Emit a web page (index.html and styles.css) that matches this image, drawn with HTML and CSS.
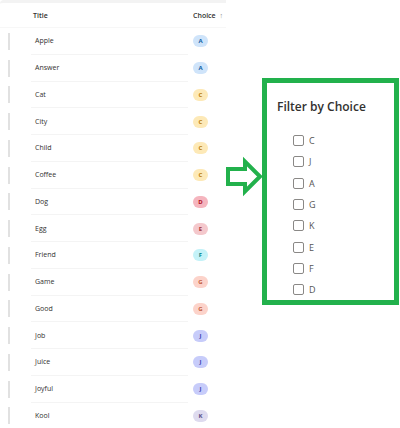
FILE: index.html
```html
<!DOCTYPE html>
<html lang="en">
<head>
    <meta charset="UTF-8">
    <meta name="viewport" content="width=device-width, initial-scale=1.0">
    <title>Filter by Choice</title>
    <link rel="stylesheet" href="styles.css">
</head>
<body>
    <!-- list view -->
    <div class="list">
        <div class="head">
            <span class="h-title">Title</span>
            <span class="h-choice">Choice <span class="sort">&#8593;</span></span>
        </div>
        <div class="row"><i class="handle"></i><span class="title">Apple</span><span class="badge b-a">A</span></div>
        <div class="row"><i class="handle"></i><span class="title">Answer</span><span class="badge b-a">A</span></div>
        <div class="row"><i class="handle"></i><span class="title">Cat</span><span class="badge b-c">C</span></div>
        <div class="row"><i class="handle"></i><span class="title">City</span><span class="badge b-c">C</span></div>
        <div class="row"><i class="handle"></i><span class="title">Child</span><span class="badge b-c">C</span></div>
        <div class="row"><i class="handle"></i><span class="title">Coffee</span><span class="badge b-c">C</span></div>
        <div class="row"><i class="handle"></i><span class="title">Dog</span><span class="badge b-d">D</span></div>
        <div class="row"><i class="handle"></i><span class="title">Egg</span><span class="badge b-e">E</span></div>
        <div class="row"><i class="handle"></i><span class="title">Friend</span><span class="badge b-f">F</span></div>
        <div class="row"><i class="handle"></i><span class="title">Game</span><span class="badge b-g">G</span></div>
        <div class="row"><i class="handle"></i><span class="title">Good</span><span class="badge b-g">G</span></div>
        <div class="row"><i class="handle"></i><span class="title">Job</span><span class="badge b-j">J</span></div>
        <div class="row"><i class="handle"></i><span class="title">Juice</span><span class="badge b-j">J</span></div>
        <div class="row"><i class="handle"></i><span class="title">Joyful</span><span class="badge b-j">J</span></div>
        <div class="row"><i class="handle"></i><span class="title">Kool</span><span class="badge b-k">K</span></div>
    </div>

    <!-- arrow pointing at the filter pane -->
    <svg class="arrow" width="36" height="36" viewBox="0 0 36 36">
        <polygon points="2,10 19,10 19,2.5 34,17.5 19,32.5 19,25 2,25" fill="#fff" stroke="#22b14c" stroke-width="4"/>
    </svg>

    <div class="filter">
        <div class="filter-title">Filter by Choice</div>
        <div class="opts">
            <label class="opt"><i class="box"></i>C</label>
            <label class="opt"><i class="box"></i>J</label>
            <label class="opt"><i class="box"></i>A</label>
            <label class="opt"><i class="box"></i>G</label>
            <label class="opt"><i class="box"></i>K</label>
            <label class="opt"><i class="box"></i>E</label>
            <label class="opt"><i class="box"></i>F</label>
            <label class="opt"><i class="box"></i>D</label>
        </div>
    </div>
</body>
</html>
```

FILE: styles.css
```css
body {
    margin: 0;
    background: #fff;
    display: flex;
    align-items: flex-start;
    font-family: "Open Sans", "Noto Sans", sans-serif;
    color: #323130;
}

/* list */
.list {
    width: 226px;
    flex: none;
    border-top: 3px solid #f3f3f3;
    border-top-left-radius: 4px;
}
.head {
    height: 25px;
    display: flex;
    align-items: center;
    font-size: 7px;
    font-weight: 600;
    border-bottom: 1px solid #f7f7f7;
    box-sizing: border-box;
}
.h-title { margin-left: 33px; width: 160px; }
.sort { color: #8a8886; margin-left: 2px; font-weight: 400; }

.row {
    height: 26.75px;
    display: flex;
    align-items: center;
    font-size: 7px;
}
.handle {
    width: 2px;
    height: 17px;
    margin-left: 8px;
    background: #e1e1e1;
}
.title {
    margin-left: 21px;
    width: 157px;
    height: 100%;
    padding-left: 4px;
    display: flex;
    align-items: center;
    border-bottom: 1px solid #f4f4f4;
    box-sizing: border-box;
}
.row:last-child .title { border-bottom: none; }

.badge {
    margin-left: 5px;
    width: 15px;
    height: 12px;
    border-radius: 6px;
    font-size: 6px;
    font-weight: 700;
    display: flex;
    align-items: center;
    justify-content: center;
}
.b-a { background: #cfe4fa; color: #115ea3; }
.b-c { background: #fde9b7; color: #b97a06; }
.b-d { background: #f5b5be; color: #b10e1c; }
.b-e { background: #f4c8cc; color: #a4373a; }
.b-f { background: #c4f2f8; color: #038387; }
.b-g { background: #fcd3ca; color: #c25c3c; }
.b-j { background: #c7ccfa; color: #3b3fb0; }
.b-k { background: #dedbef; color: #5b4f8a; }

/* annotation */
.arrow {
    flex: none;
    margin-top: 159px;
    overflow: visible;
}

.filter {
    flex: none;
    margin-top: 78px;
    width: 137px;
    height: 227px;
    box-sizing: border-box;
    border: 5px solid #22b14c;
    padding: 16px 0 0 10px;
    background: #fff;
}
.filter-title {
    font-size: 12px;
    font-weight: 600;
    line-height: 16px;
    color: #323130;
}
.opts {
    margin-top: 15px;
    padding-left: 16px;
}
.opt {
    height: 21.3px;
    display: flex;
    align-items: center;
    font-size: 9px;
    color: #555;
}
.box {
    width: 11px;
    height: 11px;
    box-sizing: border-box;
    border: 1px solid #8a8886;
    border-radius: 2px;
    margin-right: 5px;
}
```
